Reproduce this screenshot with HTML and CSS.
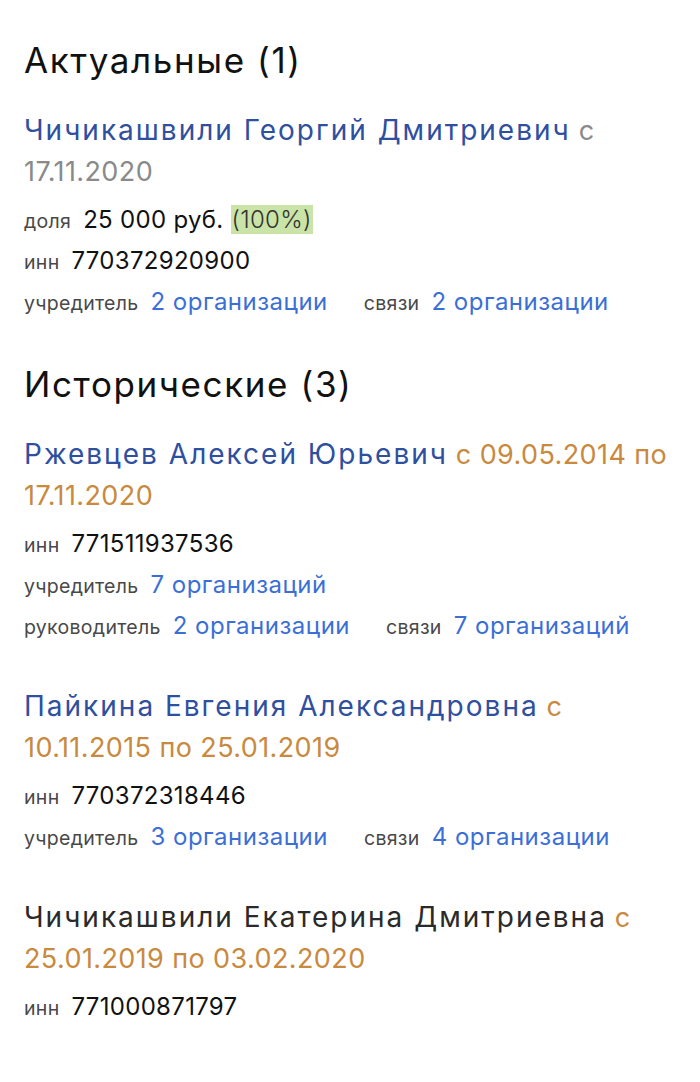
FILE: index.html
```html
<!DOCTYPE html>
<html lang="ru">
<head>
    <meta charset="UTF-8">
    <meta name="viewport" content="width=device-width, initial-scale=1.0">
    <title>Учредители</title>
    <link rel="stylesheet" href="styles.css">
</head>
<body>
    <div class="page">
        <h2 class="section-title">Актуальные (1)</h2>

        <div class="person">
            <div class="person-name">
                <a class="name">Чичикашвили Георгий Дмитриевич</a> <span class="period current">с 17.11.2020</span>
            </div>
            <div class="row">
                <span class="pair"><span class="label">доля</span><span class="value">25 000 руб. <span class="share">(100%)</span></span></span>
            </div>
            <div class="row">
                <span class="pair"><span class="label">инн</span><span class="value">770372920900</span></span>
            </div>
            <div class="row">
                <span class="pair"><span class="label">учредитель</span><a class="link">2 организации</a></span>
                <span class="pair"><span class="label">связи</span><a class="link">2 организации</a></span>
            </div>
        </div>

        <h2 class="section-title">Исторические (3)</h2>

        <div class="person">
            <div class="person-name">
                <a class="name">Ржевцев Алексей Юрьевич</a> <span class="period">с 09.05.2014 по 17.11.2020</span>
            </div>
            <div class="row">
                <span class="pair"><span class="label">инн</span><span class="value">771511937536</span></span>
            </div>
            <div class="row">
                <span class="pair"><span class="label">учредитель</span><a class="link">7 организаций</a></span>
            </div>
            <div class="row">
                <span class="pair"><span class="label">руководитель</span><a class="link">2 организации</a></span>
                <span class="pair"><span class="label">связи</span><a class="link">7 организаций</a></span>
            </div>
        </div>

        <div class="person">
            <div class="person-name">
                <a class="name">Пайкина Евгения Александровна</a> <span class="period">с 10.11.2015 по 25.01.2019</span>
            </div>
            <div class="row">
                <span class="pair"><span class="label">инн</span><span class="value">770372318446</span></span>
            </div>
            <div class="row">
                <span class="pair"><span class="label">учредитель</span><a class="link">3 организации</a></span>
                <span class="pair"><span class="label">связи</span><a class="link">4 организации</a></span>
            </div>
        </div>

        <div class="person">
            <div class="person-name">
                <span class="name plain">Чичикашвили Екатерина Дмитриевна</span> <span class="period">с 25.01.2019 по 03.02.2020</span>
            </div>
            <div class="row">
                <span class="pair"><span class="label">инн</span><span class="value">771000871797</span></span>
            </div>
        </div>
    </div>
</body>
</html>
```

FILE: styles.css
```css
body {
    font-family: 'Inter', 'Noto Sans', sans-serif;
    background-color: #fff;
    color: #111;
    margin: 0;
    padding: 0;
}
.page {
    padding: 38px 24px 20px 24px;
}
.section-title {
    font-size: 35px;
    font-weight: 400;
    letter-spacing: 1.6px;
    line-height: 44px;
    margin: 0 0 28px 0;
    color: #111;
}
.person {
    margin-bottom: 39px;
}
.person-name {
    font-size: 28px;
    line-height: 41px;
    margin-bottom: 8px;
}
.name {
    color: #2f4f9f;
    letter-spacing: 2px;
    text-decoration: none;
}
.name.plain {
    color: #2a2a2a;
}
.period {
    font-size: 27px;
    letter-spacing: 0.4px;
    color: #c88a3e;
}
.period.current {
    color: #8a8a8a;
}
.row {
    display: flex;
    align-items: center;
    gap: 36px;
    height: 41px;
    font-size: 24px;
}
.pair {
    display: flex;
    align-items: baseline;
    line-height: 30px;
}
.label {
    font-size: 19.5px;
    letter-spacing: 0.3px;
    color: #484848;
    margin-right: 12px;
}
.value {
    color: #111;
    letter-spacing: 0.3px;
}
.share {
    background-color: #c9e4a6;
    font-weight: 300;
    color: #333;
    padding: 0 1px;
}
.link {
    color: #3b6fd6;
    letter-spacing: 0.5px;
    text-decoration: none;
}
```
